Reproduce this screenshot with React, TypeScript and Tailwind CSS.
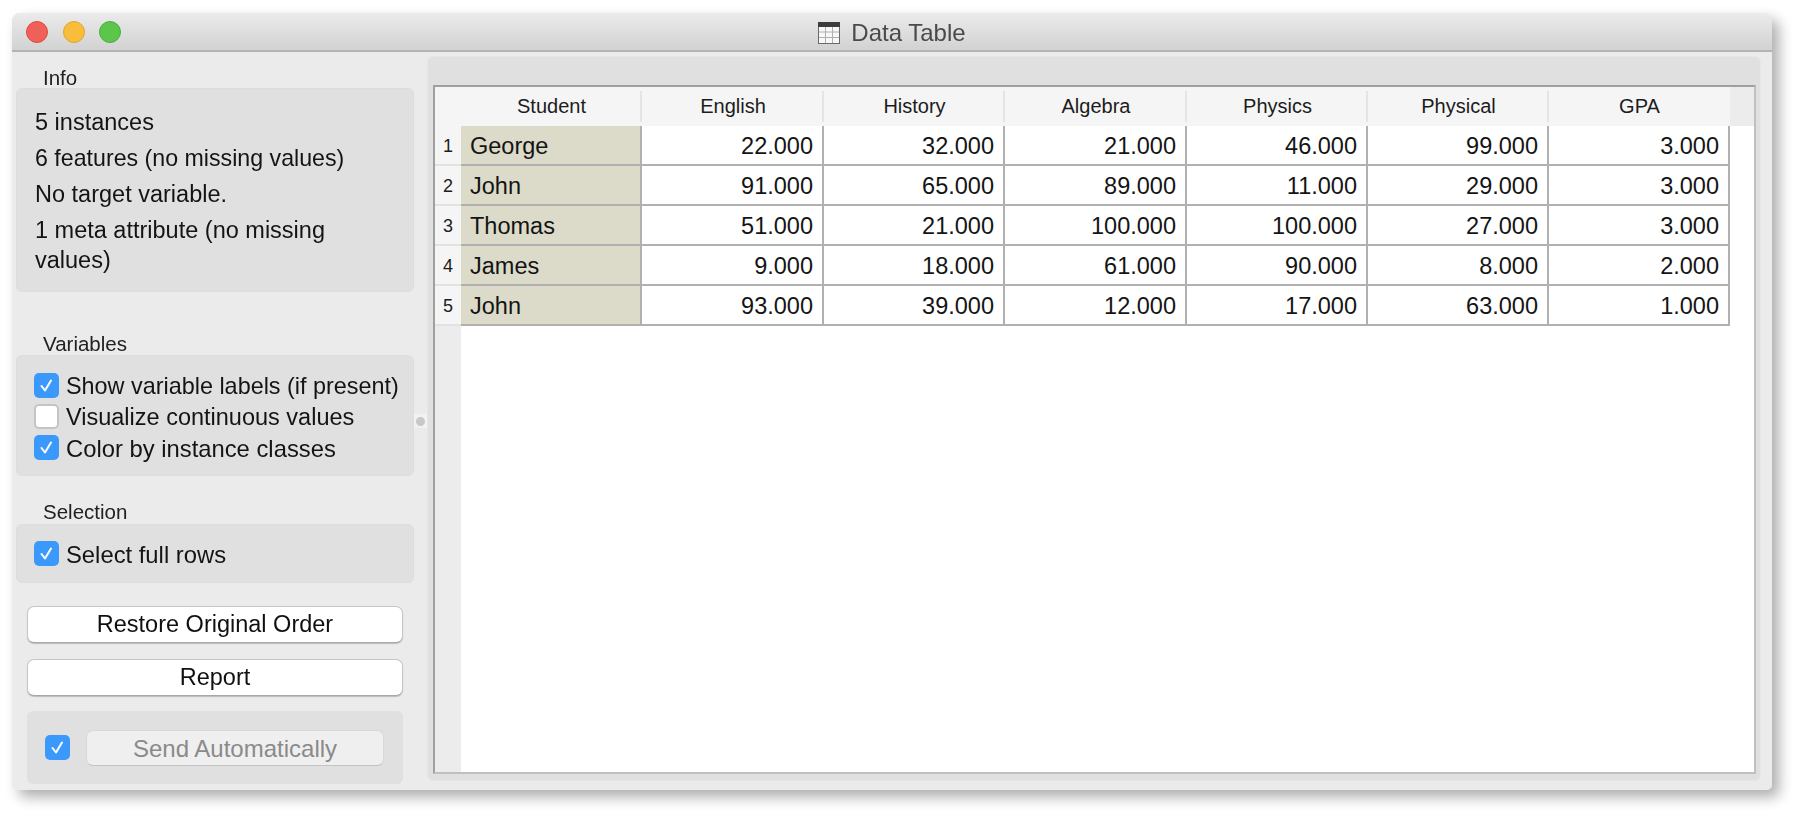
import React from "react";

const Check = ({ on }: { on: boolean }) => (
  <span
    className={
      "flex h-[25px] w-[25px] shrink-0 items-center justify-center rounded-[5px] " +
      (on ? "bg-[#3b99fc]" : "border-2 border-[#c4c4c4] bg-white")
    }
  >
    {on && (
      <svg width="17" height="17" viewBox="0 0 17 17" fill="none">
        <path d="M3.5 9 L7 13.5 L13 3.5" stroke="#ffffff" strokeWidth="2" strokeLinecap="round" strokeLinejoin="round" />
      </svg>
    )}
  </span>
);

const Row = ({ on, label, className = "", size = "text-[23.5px]" }: { on: boolean; label: string; className?: string; size?: string }) => (
  <div className={"flex h-[25px] items-center gap-[7px] " + className}>
    <Check on={on} />
    <span className={"whitespace-nowrap pt-[2px] leading-[25px] text-[#141414] " + size}>{label}</span>
  </div>
);

const GroupLabel = ({ children, className = "" }: { children: React.ReactNode; className?: string }) => (
  <div className={"pl-[27px] text-[20.5px] leading-[21px] text-[#222222] " + className}>{children}</div>
);

const columns = ["English", "History", "Algebra", "Physics", "Physical", "GPA"];
const headerWidths = ["w-[182px]", "w-[181px]", "w-[182px]", "w-[181px]", "w-[181px]", "w-[181px]"];
const rows: [string, string[]][] = [
  ["George", ["22.000", "32.000", "21.000", "46.000", "99.000", "3.000"]],
  ["John", ["91.000", "65.000", "89.000", "11.000", "29.000", "3.000"]],
  ["Thomas", ["51.000", "21.000", "100.000", "100.000", "27.000", "3.000"]],
  ["James", ["9.000", "18.000", "61.000", "90.000", "8.000", "2.000"]],
  ["John", ["93.000", "39.000", "12.000", "17.000", "63.000", "1.000"]],
];

export default function App() {
  return (
    <div className="h-[832px] w-[1812px] overflow-hidden bg-white pl-[12px] pt-[13px] font-['Liberation_Sans',Arial,sans-serif]">
      <div className="flex h-[777px] w-[1760px] flex-col rounded-t-[8px] rounded-b-[5px] bg-[#ebebeb] shadow-[7px_7px_14px_rgba(0,0,0,0.32)] blur-[0.45px]">
        <div className="relative flex h-[39px] shrink-0 items-center justify-center rounded-t-[8px] border-b-2 border-[#b4b4b4] bg-gradient-to-b from-[#ebebeb] to-[#d2d2d2] pt-[2px]">
          <div className="absolute left-[14px] top-[8px] flex gap-[14.5px]">
            <span className="h-[22px] w-[22px] rounded-full border border-[#e2463f] bg-[#f0605a]" />
            <span className="h-[22px] w-[22px] rounded-full border border-[#e5a32b] bg-[#f8bd3a]" />
            <span className="h-[22px] w-[22px] rounded-full border border-[#4aae3c] bg-[#5bc64a]" />
          </div>
          <svg width="22" height="22" viewBox="0 0 22 22" className="mr-[11px]">
            <rect x="0.5" y="0.5" width="21" height="21" fill="#f8f8f8" stroke="#6a6a6a" />
            <rect x="0" y="0" width="22" height="5" fill="#3c3c3c" />
            <path d="M7.5 5V21M14.5 5V21M1 10H21M1 15.5H21" stroke="#b0b0b0" strokeWidth="1" />
          </svg>
          <span className="text-[24px] text-[#4a4a4a]">Data Table</span>
        </div>

        <div className="flex min-h-0 flex-1">
          <div className="ml-[4px] flex w-[398px] shrink-0 flex-col">
            <GroupLabel className="mt-[15px] h-[21px]">Info</GroupLabel>
            <div className="h-[204px] rounded-[6px] border border-[#dddddd] bg-[#e0e0e0] pl-[18px] pr-[10px] pt-[18px] text-[23.5px] leading-[30px] text-[#141414]">
              <p className="mb-[6px]">5 instances</p>
              <p className="mb-[6px] text-[23.2px]">6 features (no missing values)</p>
              <p className="mb-[6px]">No target variable.</p>
              <p className="w-[320px]">1 meta attribute (no missing values)</p>
            </div>

            <GroupLabel className="mt-[41px] h-[22px]">Variables</GroupLabel>
            <div className="h-[121px] rounded-[6px] border border-[#dddddd] bg-[#e0e0e0] pl-[17px] pt-[17px]">
              <Row on label="Show variable labels (if present)" size="text-[23.4px]" />
              <Row on={false} label="Visualize continuous values" className="mt-[6px]" />
              <Row on label="Color by instance classes" className="mt-[6px]" size="text-[23.8px]" />
            </div>

            <GroupLabel className="mt-[25px] h-[23px]">Selection</GroupLabel>
            <div className="h-[59px] rounded-[6px] border border-[#dddddd] bg-[#e0e0e0] pl-[17px] pt-[16px]">
              <Row on label="Select full rows" size="text-[23.8px]" />
            </div>

            <button className="ml-[11px] mt-[23px] h-[37px] w-[376px] rounded-[7px] border border-[#c6c6c6] border-b-[#a8a8a8] bg-white text-center text-[23.5px] text-[#101010] shadow-[0_1px_1px_rgba(0,0,0,0.2)]">
              Restore Original Order
            </button>
            <button className="ml-[11px] mt-[16px] h-[37px] w-[376px] rounded-[7px] border border-[#c6c6c6] border-b-[#a8a8a8] bg-white text-center text-[23.5px] text-[#101010] shadow-[0_1px_1px_rgba(0,0,0,0.2)]">
              Report
            </button>
            <div className="ml-[11px] mt-[15px] flex h-[73px] w-[376px] items-center rounded-[6px] bg-[#e0e0e0] pl-[18px]">
              <Check on />
              <button className="ml-[16px] h-[36px] w-[298px] rounded-[7px] border border-[#d8d8d8] border-b-[#c2c2c2] bg-[#efefef] pb-[2px] text-center text-[24px] text-[#8a8a8a]">
                Send Automatically
              </button>
            </div>
          </div>

          <div className="flex w-[13px] shrink-0 items-center justify-center">
            <span className="flex h-[14px] w-[13px] items-center justify-center bg-[#f2f2f2]">
              <span className="h-[9px] w-[9px] rounded-full bg-[#c8c8c8]" />
            </span>
          </div>

          <div className="mt-[4px] flex h-[725px] w-[1334px] shrink-0 flex-col rounded-[6px] border border-[#e6e6e6] bg-[#e0e0e0] pb-[6px] pl-[5px] pr-[4px] pt-[28px]">
            <div className="flex min-h-0 flex-1 flex-col border-2 border-[#a0a0a0] border-b-[#c0c0c0] border-r-[#c0c0c0] bg-white">
              <div className="flex h-[39px] shrink-0 bg-[#ececec]">
                <div className="w-[26px] shrink-0 bg-[#f5f5f5]" />
                <div className="flex w-[181px] shrink-0 items-center justify-center bg-[#f5f5f5] pb-[2px] text-[20px] text-[#1c1c1c]">
                  Student
                </div>
                {columns.map((c, i) => (
                  <div
                    key={c}
                    className={"relative flex shrink-0 items-center justify-center bg-[#f5f5f5] pb-[2px] text-[20px] text-[#1c1c1c] " + headerWidths[i]}
                  >
                    <span className="absolute bottom-[4px] left-[-2px] top-[4px] w-[2px] bg-[#e4e4e4]" />
                    {c}
                  </div>
                ))}
              </div>
              <div className="flex min-h-0 flex-1">
                <div className="flex w-[26px] shrink-0 flex-col bg-[#ececec]">
                  {rows.map((_, i) => (
                    <div
                      key={i}
                      className="flex h-[40px] items-center justify-center border-b-2 border-[#e2e2e2] bg-[#f5f5f5] pt-[2px] text-[18px] text-[#1c1c1c]"
                    >
                      {i + 1}
                    </div>
                  ))}
                </div>
                <div className="flex flex-col">
                  {rows.map(([name, vals], r) => (
                    <div key={r} className="flex h-[40px] border-b-2 border-[#b0b0b0]">
                      <div className="flex w-[181px] shrink-0 items-center border-r-2 border-[#b0b0b0] bg-[#dcdbc9] pl-[9px] pt-[3px] text-[23.5px] text-[#141414]">
                        {name}
                      </div>
                      {vals.map((v, i) => (
                        <div
                          key={i}
                          className={"flex shrink-0 items-center justify-end border-r-2 border-[#b0b0b0] pr-[9px] pt-[3px] text-[23.5px] text-[#141414] " + headerWidths[i]}
                        >
                          {v}
                        </div>
                      ))}
                    </div>
                  ))}
                </div>
              </div>
            </div>
          </div>
        </div>
      </div>
    </div>
  );
}
